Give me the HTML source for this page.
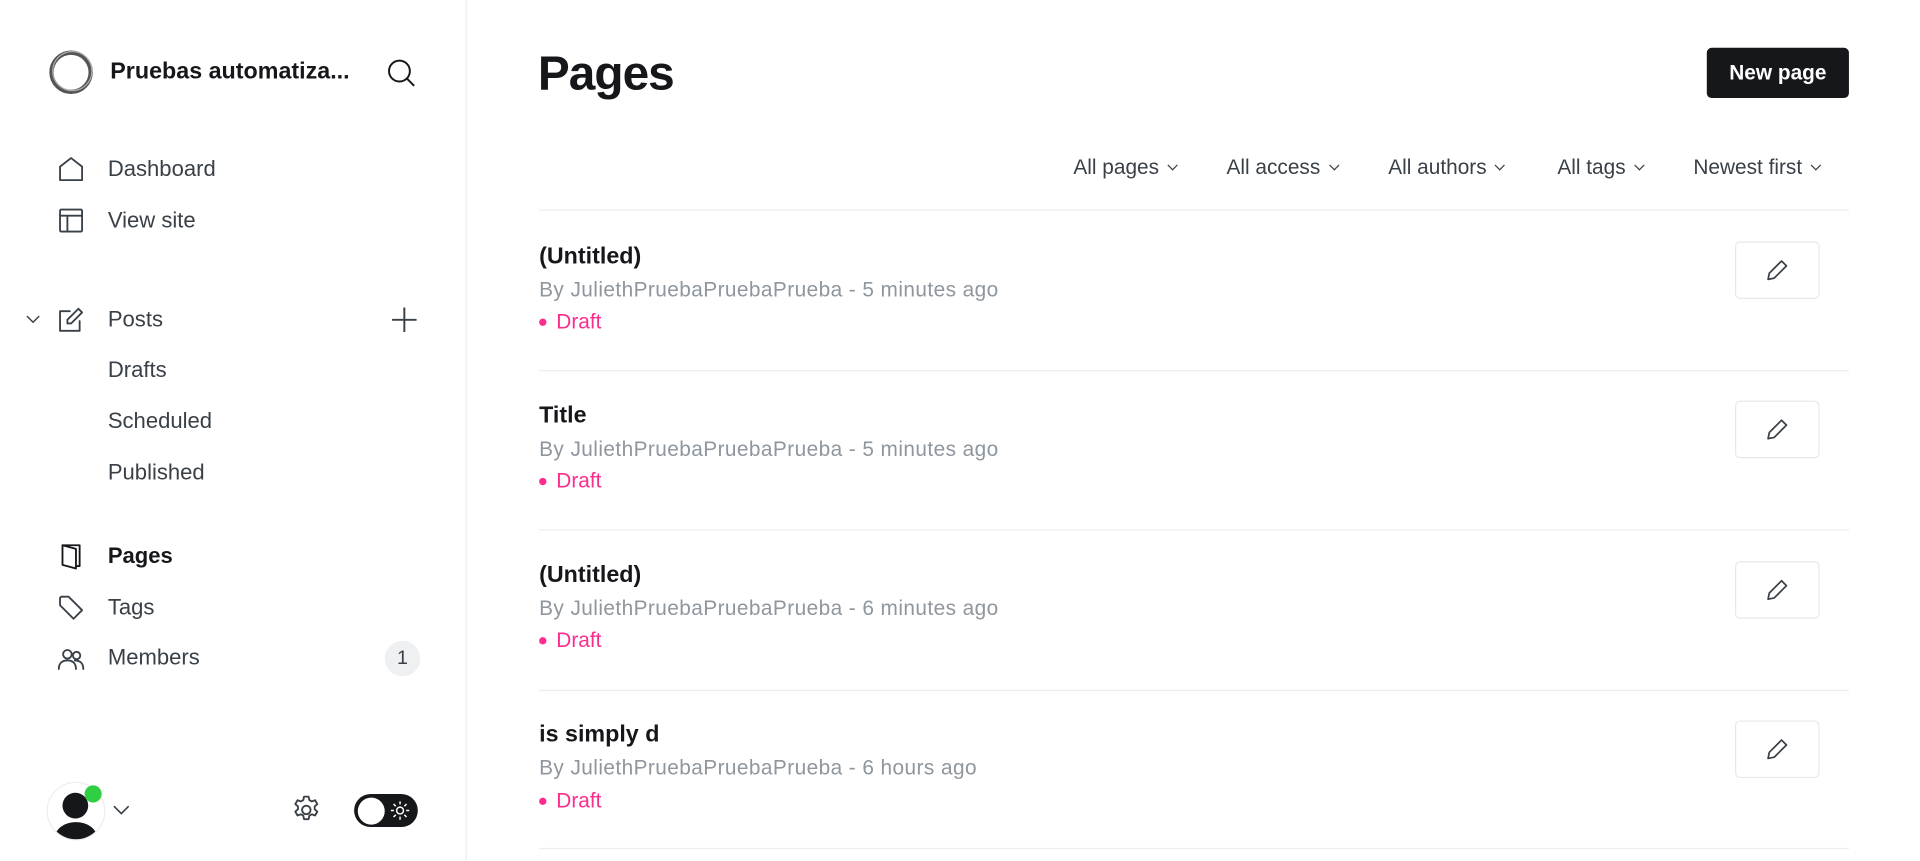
<!DOCTYPE html>
<html><head><meta charset="utf-8"><style>
html,body{margin:0;padding:0;background:#fff;overflow:hidden}
body{width:1920px;height:861px;font-family:"Liberation Sans",sans-serif;}
#w{position:absolute;left:0;top:0;width:1567px;height:703px;transform:scale(1.22527);transform-origin:0 0;}
.a{position:absolute;white-space:nowrap}
.nav{position:absolute;left:88px;font-size:18px;color:#394047;transform:translateY(-50%)}
.ic{position:absolute;left:47px;width:22px;height:22px;transform:translateY(-50%)}
.ic svg{width:22px;height:22px;fill:none;stroke:#394047;stroke-width:1.5;stroke-linejoin:round;stroke-linecap:round}
.f{position:absolute;top:137px;transform:translateY(-50%);font-size:17px;color:#394047}
.f:after{content:"";display:inline-block;width:5px;height:5px;border-right:1.2px solid #394047;border-bottom:1.2px solid #394047;transform:rotate(45deg);margin-left:8px;position:relative;top:-4px}
.t{position:absolute;left:440px;font-size:19px;font-weight:bold;color:#15171a;transform:translateY(-50%)}
.m{position:absolute;left:440px;font-size:17px;color:#8e969e;transform:translateY(-50%);letter-spacing:0.34px}
.d{position:absolute;left:440px;font-size:17px;color:#fb2d8d;transform:translateY(-50%)}
.d:before{content:"";display:inline-block;width:6px;height:6px;border-radius:50%;background:#fb2d8d;margin-right:8px;position:relative;top:-2px}
.hr{position:absolute;left:440px;width:1069px;height:1px;background:#ebeef0}
.eb{position:absolute;left:1416px;width:67px;height:45px;border:1px solid #e6e9eb;border-radius:4px}
.eb svg{position:absolute;left:24px;top:13px;width:19px;height:19px;fill:none;stroke:#394047;stroke-width:1.4;stroke-linejoin:round}
</style></head><body><div id="w">
<div class="a" style="left:380px;top:0;width:1px;height:703px;background:#ebeef0"></div>
<svg class="a" style="left:39px;top:40px" width="38" height="38" viewBox="0 0 38 38"><circle cx="19" cy="19" r="16" fill="none" stroke="#555" stroke-width="3.5"/><circle cx="20" cy="18" r="16" fill="none" stroke="#aaa" stroke-width="1"/></svg>
<div class="a" style="left:90px;top:59px;transform:translateY(-50%);font-size:19px;font-weight:bold;color:#15171a">Pruebas automatiza...</div>
<svg class="a" style="left:315px;top:47px" width="26" height="26" viewBox="0 0 26 26" fill="none" stroke="#15171a" stroke-width="1.6"><circle cx="11" cy="11" r="8.5"/><path d="M17 17l6 6"/></svg>
<div class="ic" style="top:138px"><svg viewBox="0 0 22 22"><path d="M2 9L11 2l9 7v11H2z"/></svg></div>
<div class="nav" style="top:138px">Dashboard</div>
<div class="ic" style="top:180px"><svg viewBox="0 0 22 22"><rect x="2" y="2" width="18" height="18" rx="1"/><path d="M2 7h18M8 7v13"/></svg></div>
<div class="nav" style="top:180px">View site</div>
<svg class="a" style="left:20px;top:256px" width="14" height="10" viewBox="0 0 14 10" fill="none" stroke="#394047" stroke-width="1.2"><path d="M2 2l5 5 5-5"/></svg>
<div class="ic" style="top:261px"><svg viewBox="0 0 22 22"><path d="M10 4H2v16h16v-8"/><path d="M17 2l3 3-9 9H8v-3z"/></svg></div>
<div class="nav" style="top:261px">Posts</div>
<svg class="a" style="left:319px;top:250px" width="22" height="22" viewBox="0 0 22 22" stroke="#394047" stroke-width="1.6"><path d="M11 1v20M1 11h20"/></svg>
<div class="nav" style="top:302px">Drafts</div>
<div class="nav" style="top:344px">Scheduled</div>
<div class="nav" style="top:386px">Published</div>
<div class="ic" style="top:454px"><svg viewBox="0 0 22 22" style="stroke:#15171a"><path d="M4 2h14v17h-3M4 2v16l11 3V5z"/></svg></div>
<div class="nav" style="top:454px;font-weight:bold;color:#15171a">Pages</div>
<div class="ic" style="top:496px"><svg viewBox="0 0 22 22"><path d="M2 3v6l11 11 7-7L9 2H3z"/></svg></div>
<div class="nav" style="top:496px">Tags</div>
<div class="ic" style="top:537px"><svg viewBox="0 0 22 22"><circle cx="8" cy="8" r="3.5"/><circle cx="15.5" cy="9" r="3"/><path d="M1 20c0-5 3-7 7-7s7 2 7 7M14 13c4 0 7 2 7 7"/></svg></div>
<div class="nav" style="top:537px">Members</div>
<div class="a" style="left:314px;top:523px;width:29px;height:29px;border-radius:50%;background:#eff0f2;color:#394047;font-size:16px;text-align:center;line-height:29px">1</div>
<div class="a" style="left:38px;top:638px;width:46px;height:46px;border-radius:50%;border:1px solid #eee;overflow:hidden;background:#fff">
<div class="a" style="left:12px;top:8px;width:21px;height:21px;border-radius:50%;background:#15171a"></div>
<div class="a" style="left:6px;top:32px;width:34px;height:24px;border-radius:50%;background:#15171a"></div></div>
<div class="a" style="left:69px;top:641px;width:14px;height:14px;border-radius:50%;background:#30cf43"></div>
<svg class="a" style="left:91px;top:656px" width="16" height="10" viewBox="0 0 16 10" fill="none" stroke="#394047" stroke-width="1.3"><path d="M2 2l6 6 6-6"/></svg>
<svg class="a" style="left:237px;top:648px" width="26" height="26" viewBox="0 0 24 24" fill="none" stroke="#394047" stroke-width="1.4" stroke-linejoin="round"><circle cx="12" cy="12" r="3.2"/><path d="M10.3 2h3.4l.6 2.6 1.8 1 2.5-.9 1.7 2.9-2 1.8v2.1l2 1.8-1.7 2.9-2.5-.9-1.8 1-.6 2.7h-3.4l-.6-2.7-1.8-1-2.5.9-1.7-2.9 2-1.8v-2.1l-2-1.8 1.7-2.9 2.5.9 1.8-1z"/></svg>
<div class="a" style="left:289px;top:648px;width:52px;height:27px;border-radius:14px;background:#15171a"></div>
<div class="a" style="left:292px;top:651px;width:22px;height:22px;border-radius:50%;background:#fff"></div>
<svg class="a" style="left:318px;top:653px" width="17" height="17" viewBox="0 0 17 17" fill="none" stroke="#fff" stroke-width="1.2"><circle cx="8.5" cy="8.5" r="2.8"/><path d="M8.5 1v2.5M8.5 13.5V16M1 8.5h2.5M13.5 8.5H16M3.2 3.2l1.8 1.8M12 12l1.8 1.8M3.2 13.8L5 12M12 5l1.8-1.8"/></svg>

<div class="a" style="left:439px;top:61px;transform:translateY(-50%);font-size:39px;font-weight:bold;color:#15171a;letter-spacing:-0.8px">Pages</div>
<div class="a" style="left:1393px;top:39px;width:116px;height:41px;border-radius:4px;background:#15171a;color:#fff;font-size:17px;font-weight:bold;text-align:center;line-height:41px">New page</div>
<div class="f" style="left:876px">All pages</div>
<div class="f" style="left:1001px">All access</div>
<div class="f" style="left:1133px">All authors</div>
<div class="f" style="left:1271px">All tags</div>
<div class="f" style="left:1382px">Newest first</div>
<div class="hr" style="top:171px"></div>

<div class="t" style="top:210px">(Untitled)</div>
<div class="m" style="top:237px">By JuliethPruebaPruebaPrueba - 5 minutes ago</div>
<div class="d" style="top:263px">Draft</div>
<div class="eb" style="top:197px"><svg viewBox="0 0 19 19"><path d="M13 2l4 4L7 16l-5 1 1-5z"/></svg></div>
<div class="hr" style="top:302px"></div>

<div class="t" style="top:340px">Title</div>
<div class="m" style="top:367px">By JuliethPruebaPruebaPrueba - 5 minutes ago</div>
<div class="d" style="top:393px">Draft</div>
<div class="eb" style="top:327px"><svg viewBox="0 0 19 19"><path d="M13 2l4 4L7 16l-5 1 1-5z"/></svg></div>
<div class="hr" style="top:432px"></div>

<div class="t" style="top:470px">(Untitled)</div>
<div class="m" style="top:497px">By JuliethPruebaPruebaPrueba - 6 minutes ago</div>
<div class="d" style="top:523px">Draft</div>
<div class="eb" style="top:458px"><svg viewBox="0 0 19 19"><path d="M13 2l4 4L7 16l-5 1 1-5z"/></svg></div>
<div class="hr" style="top:563px"></div>

<div class="t" style="top:600px">is simply d</div>
<div class="m" style="top:627px">By JuliethPruebaPruebaPrueba - 6 hours ago</div>
<div class="d" style="top:654px">Draft</div>
<div class="eb" style="top:588px"><svg viewBox="0 0 19 19"><path d="M13 2l4 4L7 16l-5 1 1-5z"/></svg></div>
<div class="hr" style="top:692px"></div>
</div></body></html>
